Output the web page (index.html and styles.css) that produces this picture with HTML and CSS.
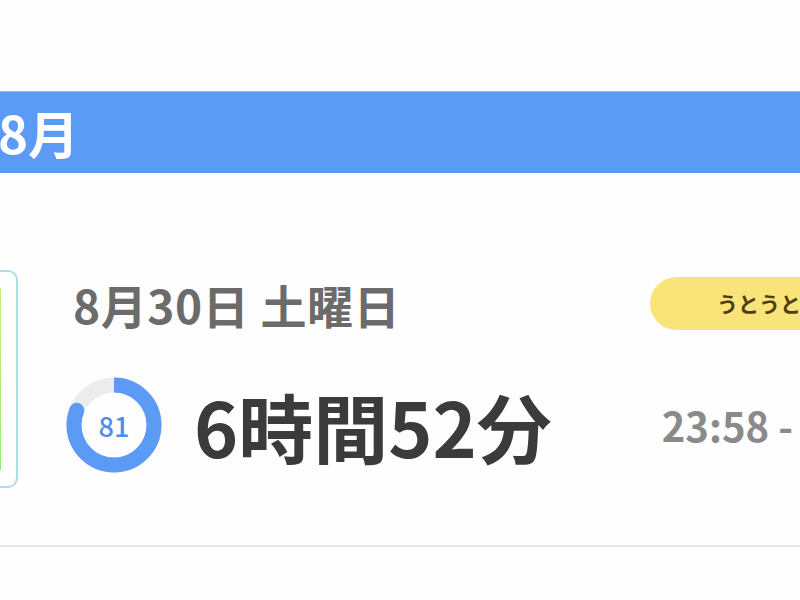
FILE: index.html
```html
<!DOCTYPE html>
<html lang="ja">
<head>
    <meta charset="UTF-8">
    <meta name="viewport" content="width=device-width, initial-scale=1.0">
    <title>睡眠記録</title>
    <link rel="stylesheet" href="styles.css">
</head>
<body>
    <div class="page">
        <div class="month-bar">
            <span class="month">8月</span>
        </div>

        <div class="entry">
            <div class="thumb">
                <div class="thumb-bar"></div>
            </div>
            <div class="info">
                <div class="info-top">
                    <span class="date">8月30日 土曜日</span>
                    <span class="badge">うとうと</span>
                </div>
                <div class="info-main">
                    <div class="score">
                        <svg width="96" height="96" viewBox="0 0 96 96">
                            <circle cx="48" cy="48" r="40" fill="none" stroke="#ececec" stroke-width="15"/>
                            <circle cx="48" cy="48" r="40" fill="none" stroke="#5b9af5" stroke-width="15"
                                    stroke-dasharray="203.6 251.3" transform="rotate(-90 48 48)"/>
                            <circle cx="10.8" cy="33.3" r="7.5" fill="#5b9af5"/>
                        </svg>
                        <span class="score-num">81</span>
                    </div>
                    <span class="duration">6時間52分</span>
                    <span class="range">23:58 - 06:50</span>
                </div>
            </div>
        </div>
    </div>
</body>
</html>
```

FILE: styles.css
```css
html, body {
    margin: 0;
    padding: 0;
    background: #fefefe;
    overflow: hidden;
}
body {
    font-family: "Noto Sans CJK JP", "Noto Sans", sans-serif;
    width: 800px;
    height: 600px;
}
.page {
    padding-top: 91px;
    width: 800px;
}
.month-bar {
    background: #5b9af5;
    height: 82px;
    border-top: 1px solid #8fbaf7;
    box-sizing: border-box;
    display: flex;
    align-items: center;
}
.month {
    color: #fff;
    font-size: 51px;
    font-weight: 700;
    margin-left: -2px;
    line-height: 1;
}
.entry {
    display: flex;
    align-items: flex-start;
    padding: 97px 0 57px;
    border-bottom: 2px solid #e6e6e6;
}
.thumb {
    width: 120px;
    height: 218px;
    margin-left: -102px;
    border: 2px solid #abdde3;
    border-radius: 10px;
    box-sizing: border-box;
    padding: 16px 15px;
    flex-shrink: 0;
}
.thumb-bar {
    height: 100%;
    background: linear-gradient(#c9f07a, #92e877);
}
.info {
    margin-left: 55px;
    margin-top: 7px;
    width: 740px;
    flex: none;
    white-space: nowrap;
}
.info-top {
    display: flex;
    align-items: center;
    height: 53px;
}
.date {
    font-size: 46px;
    font-weight: 700;
    color: #6b6b6b;
    letter-spacing: 0.6px;
    line-height: 1;
}
.badge {
    margin-left: auto;
    width: 163px;
    box-sizing: border-box;
    background: #f9e47a;
    color: #4f3f10;
    font-size: 21px;
    font-weight: 700;
    height: 53px;
    line-height: 53px;
    border-radius: 27px 0 0 27px;
    padding-left: 67px;
    overflow: hidden;
}
.info-main {
    display: flex;
    align-items: center;
    margin-top: 47px;
    height: 96px;
}
.score {
    position: relative;
    width: 96px;
    height: 96px;
    margin-left: -7px;
    flex-shrink: 0;
}
.score svg {
    display: block;
}
.score-num {
    position: absolute;
    inset: 0;
    display: flex;
    align-items: center;
    justify-content: center;
    color: #4f8ded;
    font-size: 27px;
    font-weight: 500;
}
.duration {
    margin-left: 32px;
    font-size: 75px;
    font-weight: 700;
    color: #3b3b3b;
    line-height: 1;
}
.range {
    margin-left: 110px;
    font-size: 40px;
    font-weight: 700;
    color: #8a8a8a;
    line-height: 1;
}
```
